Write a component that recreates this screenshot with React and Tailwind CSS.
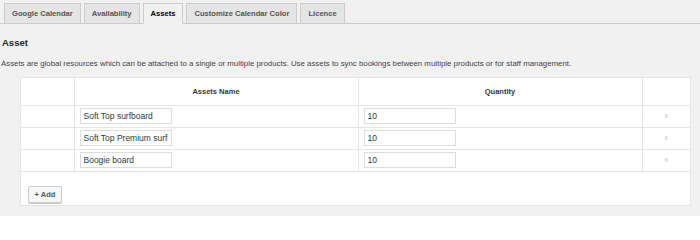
import React from 'react';

const tabs = ['Google Calendar', 'Availability', 'Assets', 'Customize Calendar Color', 'Licence'];

const assets = [
  { id: 1, name: 'Soft Top surfboard', qty: '10' },
  { id: 2, name: 'Soft Top Premium surfboard', qty: '10' },
  { id: 3, name: 'Boogie board', qty: '10' },
];

export default function App() {
  return (
    <div className="h-[216px] w-[700px] overflow-hidden bg-[#f1f1f1] text-[#23282d]" style={{ fontFamily: '"Liberation Sans", Arial, sans-serif' }}>
      {/* Tabs */}
      <div className="flex items-end gap-[3px] border-b border-[#ccc] pl-[4px] pt-[3px]">
        {tabs.map(tab => (
          <div
            key={tab}
            className={`-mb-px flex h-[21px] items-center border px-[7px] text-[7.6px] font-bold ${
              tab === 'Assets'
                ? 'border-[#ccc] border-b-[#f1f1f1] bg-[#f1f1f1] text-[#000]'
                : 'border-[#ccc] bg-[#e5e5e5] text-[#555]'
            }`}
          >
            {tab}
          </div>
        ))}
      </div>

      {/* Heading */}
      <h2 className="mt-[12px] pl-[2px] text-[9.5px] font-bold leading-[14px] text-[#23282d]">Asset</h2>
      <p className="mt-[8px] pl-[1px] text-[7.85px] leading-[12px] text-[#444]">
        Assets are global resources which can be attached to a single or multiple products. Use assets to sync bookings between multiple products or for staff management.
      </p>

      {/* Table */}
      <div className="ml-[20px] mt-[7px] w-[671px] border border-[#e5e5e5] bg-white">
        <table className="w-full table-fixed border-collapse text-[8px]">
          <thead>
            <tr className="h-[27px] border-b border-[#e5e5e5]">
              <th className="w-[53px] border-r border-[#e5e5e5]"></th>
              <th className="w-[284px] border-r border-[#e5e5e5] text-center text-[7.5px] font-bold text-[#32373c]">Assets Name</th>
              <th className="w-[284px] border-r border-[#e5e5e5] text-center text-[7.5px] font-bold text-[#32373c]">Quantity</th>
              <th></th>
            </tr>
          </thead>
          <tbody>
            {assets.map(asset => (
              <tr key={asset.id} className="h-[22px] border-b border-[#e5e5e5]">
                <td className="border-r border-[#e5e5e5]"></td>
                <td className="border-r border-[#e5e5e5] px-[5px]">
                  <input
                    type="text"
                    defaultValue={asset.name}
                    className="block h-[16px] w-[92px] border border-[#ddd] bg-white px-[3px] text-[8.5px] text-[#32373c] outline-none"
                  />
                </td>
                <td className="border-r border-[#e5e5e5] px-[5px]">
                  <input
                    type="text"
                    defaultValue={asset.qty}
                    className="block h-[16px] w-[92px] border border-[#ddd] bg-white px-[3px] text-[8.5px] text-[#32373c] outline-none"
                  />
                </td>
                <td className="text-center text-[7px] text-[#c3c3c3]">x</td>
              </tr>
            ))}
          </tbody>
        </table>
        <div className="h-[33px] pl-[7px] pt-[8px]">
          <button className="h-[17px] w-[34px] rounded-[2px] border border-[#ccc] bg-[#f7f7f7] text-[7.5px] font-bold text-[#555] shadow-[0_1px_0_#ccc]">
            + Add
          </button>
        </div>
      </div>
    </div>
  );
}
